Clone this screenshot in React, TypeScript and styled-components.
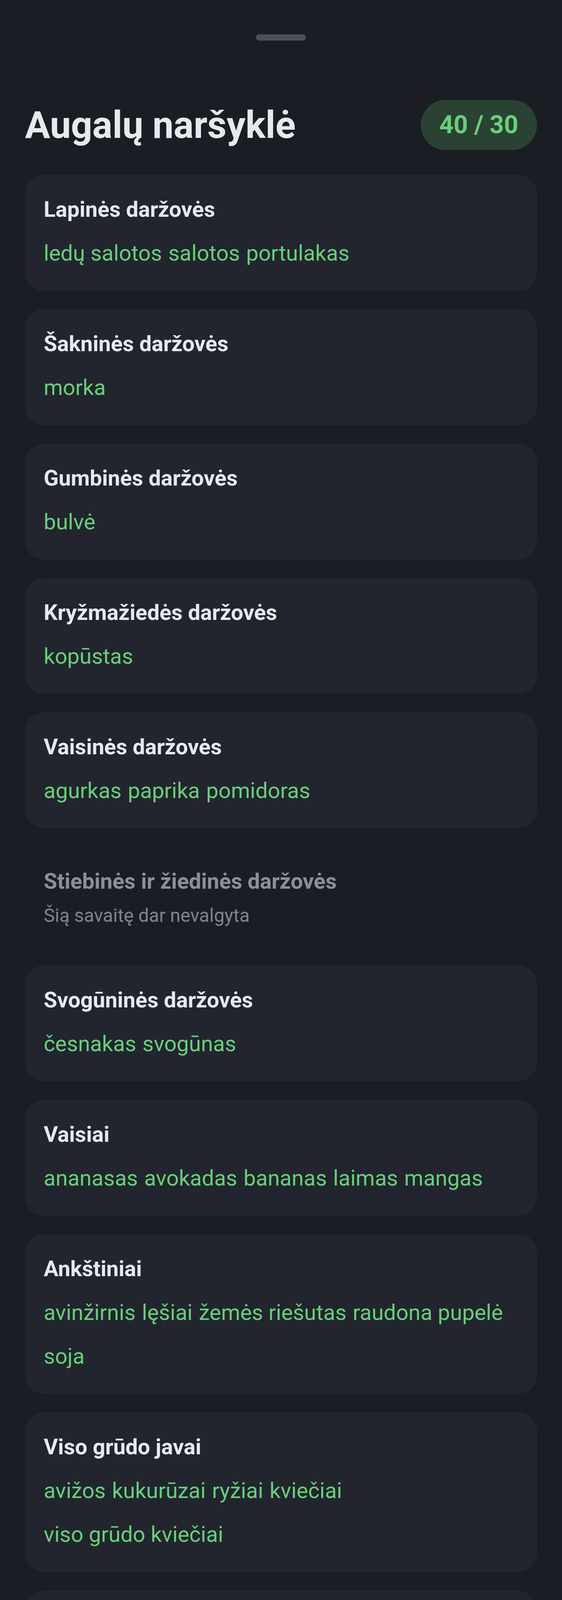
import React from 'react';
import styled, { createGlobalStyle } from 'styled-components';

interface Category {
    title: string;
    items: string[];
}

const categories: Category[] = [
    { title: 'Lapinės daržovės', items: ['ledų salotos', 'salotos', 'portulakas'] },
    { title: 'Šakninės daržovės', items: ['morka'] },
    { title: 'Gumbinės daržovės', items: ['bulvė'] },
    { title: 'Kryžmažiedės daržovės', items: ['kopūstas'] },
    { title: 'Vaisinės daržovės', items: ['agurkas', 'paprika', 'pomidoras'] },
    { title: 'Stiebinės ir žiedinės daržovės', items: [] },
    { title: 'Svogūninės daržovės', items: ['česnakas', 'svogūnas'] },
    { title: 'Vaisiai', items: ['ananasas', 'avokadas', 'bananas', 'laimas', 'mangas'] },
    { title: 'Ankštiniai', items: ['avinžirnis', 'lęšiai', 'žemės riešutas', 'raudona pupelė', 'soja'] },
    { title: 'Viso grūdo javai', items: ['avižos', 'kukurūzai', 'ryžiai', 'kviečiai', 'viso grūdo kviečiai'] },
    { title: 'Pseudojavai', items: ['bolivinė balanda'] },
    { title: 'Riešutai', items: ['anakardis', 'lazdyno riešutas', 'pekanų riešutas', 'graikinis riešutas'] },
    { title: 'Sėklos', items: ['kanapių sėklos', 'linų sėmenys'] },
    { title: 'Žolelės ir prieskoniai', items: ['kakava', 'kuminas', 'kalendra', 'kalendrų sėklos', 'ciberdrėklė'] },
    { title: 'Grybai ir jūros dumbliai', items: ['Chlorella', 'Spirulina'] },
    { title: 'Kita / Nežinoma', items: [] },
];

const GlobalStyle = createGlobalStyle`
    html, body {
        margin: 0;
        padding: 0;
        min-height: 100%;
        background: #1b1d24;
    }

    body {
        font-family: Roboto, "Noto Sans", "Liberation Sans", sans-serif;
        color: #e8e9ed;
        -webkit-font-smoothing: antialiased;
    }
`;

const CategoryCard: React.FunctionComponent<Category> = ({ title, items }): React.ReactElement => {
    const empty = items.length === 0;

    return (
        <Card empty={empty}>
            <CardTitle empty={empty}>{ title }</CardTitle>
            { empty ? (
                <EmptyNote>Šią savaitę dar nevalgyta</EmptyNote>
            ) : (
                <ItemList>
                    { items.map((item) => <Item key={item}>{ item }</Item>) }
                </ItemList>
            ) }
        </Card>
    );
};

const App: React.FunctionComponent = (): React.ReactElement => (
    <>
        <GlobalStyle />
        <Sheet>
            <Handle />
            <Header>
                <Title>Augalų naršyklė</Title>
                <Counter>40 / 30</Counter>
            </Header>
            <List>
                { categories.map((category) => (
                    <CategoryCard key={category.title} {...category} />
                )) }
            </List>
        </Sheet>
    </>
);

const Sheet = styled.div`
    padding: 88px 64px 48px;
    background: #1b1d24;
`;

const Handle = styled.div`
    width: 128px;
    height: 16px;
    margin: 0 auto;
    border-radius: 8px;
    background: #4b4f58;
`;

const Header = styled.header`
    display: flex;
    align-items: center;
    justify-content: space-between;
    height: 128px;
    margin-top: 152px;
`;

const Title = styled.h1`
    margin: 0;
    font-size: 96px;
    line-height: 112px;
    font-weight: 700;
    color: #e8e9ed;
`;

const Counter = styled.div`
    box-sizing: border-box;
    height: 128px;
    padding: 24px 48px;
    border-radius: 64px;
    background: #2a4232;
    color: #68cf7b;
    font-size: 64px;
    line-height: 80px;
    font-weight: 700;
`;

const List = styled.div`
    display: flex;
    flex-direction: column;
    gap: 48px;
    margin-top: 64px;
`;

const Card = styled.section<{ empty: boolean }>`
    padding: 48px;
    border-radius: 48px;
    background: ${({ empty }): string => (empty ? 'transparent' : '#22252e')};
`;

const CardTitle = styled.h2<{ empty: boolean }>`
    margin: 0;
    font-size: 56px;
    line-height: 80px;
    font-weight: 700;
    color: ${({ empty }): string => (empty ? '#8a909b' : '#e8e9ed')};
`;

const EmptyNote = styled.p`
    margin: 16px 0 0;
    font-size: 48px;
    line-height: 64px;
    color: #7e848e;
`;

const ItemList = styled.div`
    display: flex;
    flex-wrap: wrap;
    gap: 16px;
    margin-top: 24px;
`;

const Item = styled.span`
    padding: 8px 0;
    font-size: 56px;
    line-height: 80px;
    color: #68cf7b;
    white-space: nowrap;
`;

export default App;
